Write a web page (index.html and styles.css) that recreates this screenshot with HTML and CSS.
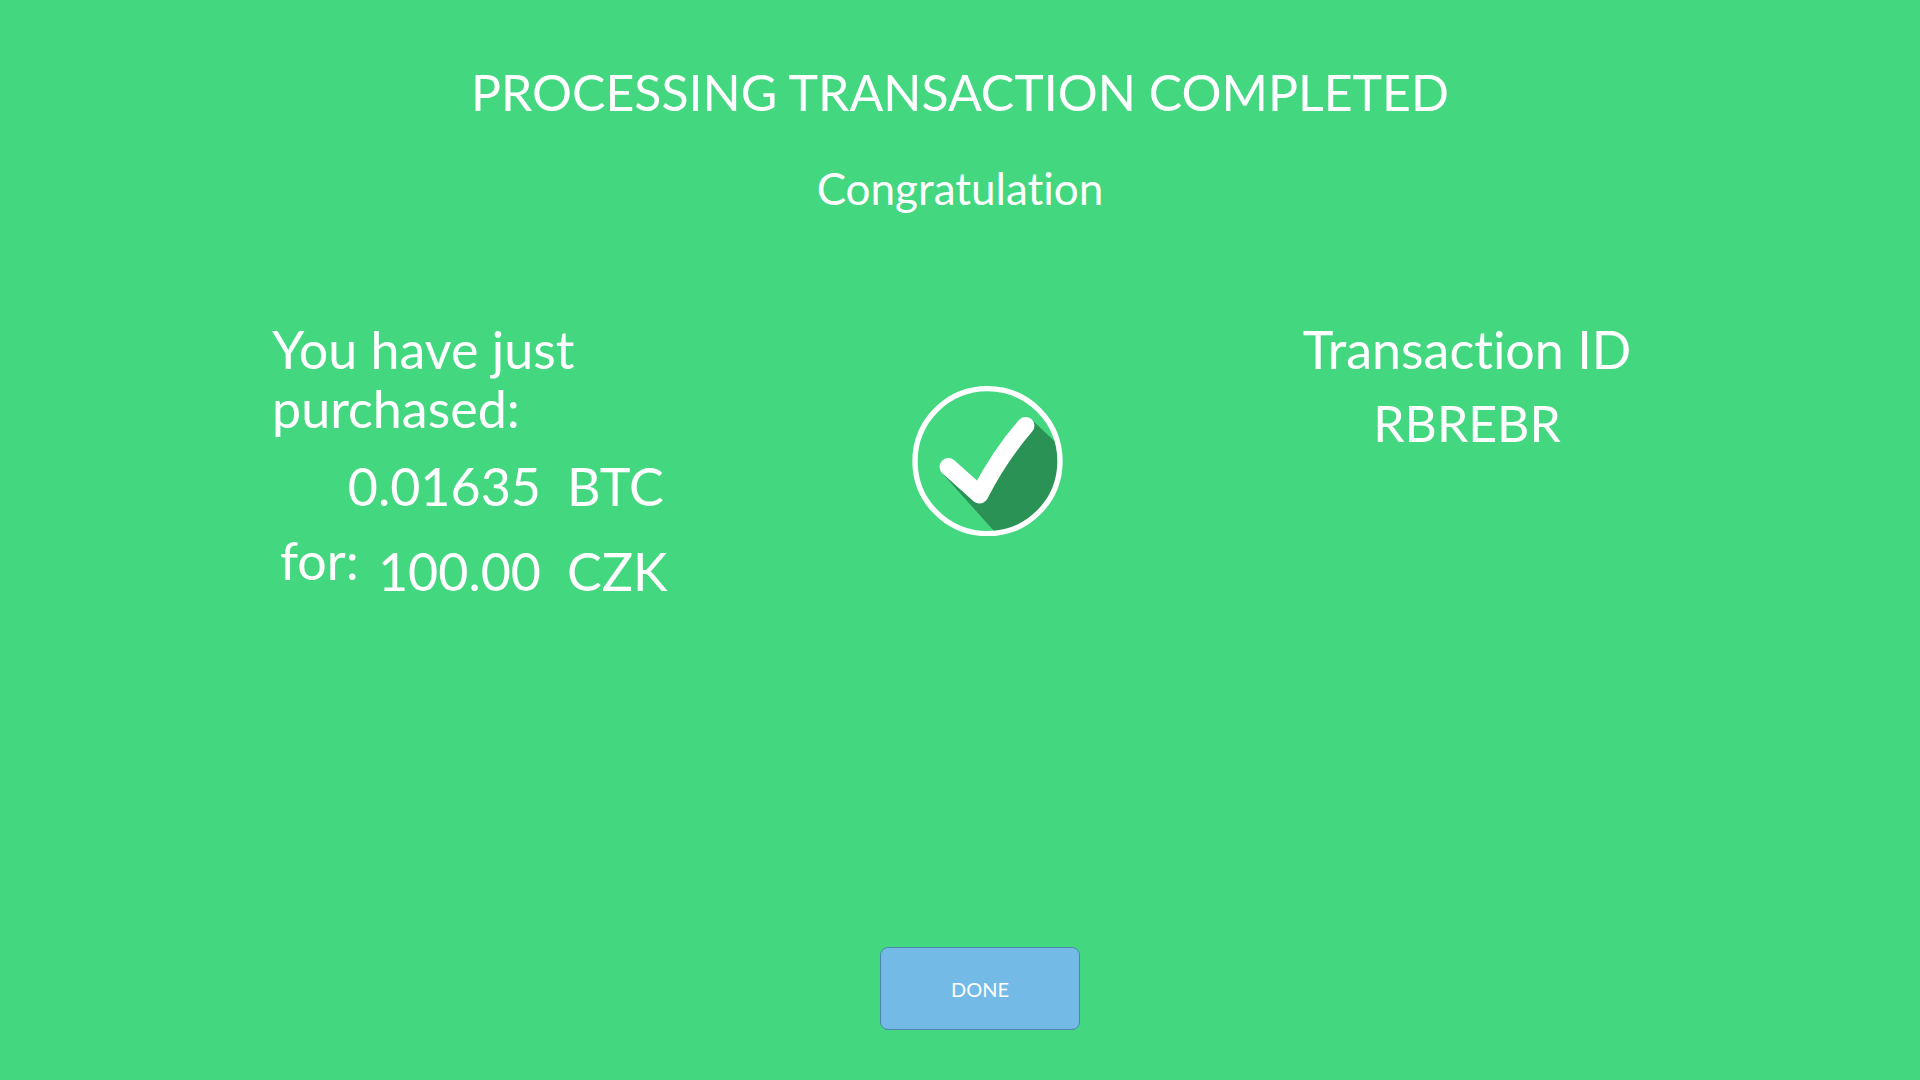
FILE: index.html
```html
<!DOCTYPE html>
<html lang="en">
<head>
    <meta charset="UTF-8">
    <meta name="viewport" content="width=device-width, initial-scale=1.0">
    <title>Processing transaction completed</title>
    <link rel="stylesheet" href="styles.css">
</head>
<body>
    <div class="page">
        <header class="header">
            <h1>PROCESSING TRANSACTION COMPLETED</h1>
            <h2>Congratulation</h2>
        </header>

        <main class="content">
            <!-- purchase summary -->
            <section class="purchase">
                <p class="purchase-title">You have just purchased:</p>
                <div class="amounts">
                    <span></span>
                    <span class="value">0.01635</span>
                    <span>BTC</span>
                    <span class="label">for:</span>
                    <span class="value paid">100.00</span>
                    <span class="paid">CZK</span>
                </div>
            </section>

            <!-- check mark -->
            <svg class="check" viewBox="37 33 452 450" aria-hidden="true">
                <defs>
                    <clipPath id="inner"><circle cx="263" cy="258" r="212"/></clipPath>
                </defs>
                <path d="M126 293L306 493H520V252L398 136L238 358Z" fill="#2a9255" clip-path="url(#inner)"/>
                <circle cx="263" cy="258" r="217" fill="none" stroke="#fff" stroke-width="16"/>
                <path d="M146 275L239 358Q300 240 377 152" fill="none" stroke="#fff" stroke-width="53" stroke-linecap="round" stroke-linejoin="round"/>
            </svg>

            <!-- transaction -->
            <section class="transaction">
                <p>Transaction ID</p>
                <p class="transaction-id">RBREBR</p>
            </section>
        </main>

        <footer class="footer">
            <button type="button" class="done-btn">DONE</button>
        </footer>
    </div>
</body>
</html>
```
FILE: styles.css
```css
* {
    box-sizing: border-box;
}
body {
    margin: 0;
    background: #43d780;
    color: white;
    font-family: Lato, 'Open Sans', sans-serif;
    font-size: 52px;
    font-variant-ligatures: none;
    line-height: 59px;
}
h1, h2, p {
    margin: 0;
    font-weight: 400;
}
.page {
    display: flex;
    flex-direction: column;
    min-height: 100vh;
    padding: 63px 0 50px;
}
.header {
    text-align: center;
}
h1 {
    font-size: 50px;
}
h2 {
    margin-top: 39px;
    font-size: 44px;
    line-height: 54px;
}
.content {
    display: grid;
    grid-template-columns: 1fr 151px 1fr;
    flex: 1;
    align-items: start;
    margin-top: 105px;
    padding: 0 217px 0 272px;
}
.purchase-title {
    max-width: 400px;
}
.amounts {
    display: grid;
    grid-template-columns: 80px 189px auto;
    justify-content: start;
    gap: 15px 0;
    margin-top: 19px;
}
.amounts .label {
    padding-left: 8px;
}
.amounts .value {
    justify-self: end;
}
.amounts span:nth-child(3n) {
    padding-left: 26px;
}
.amounts .paid {
    padding-top: 11px;
}
.check {
    width: 100%;
    margin-top: 66px;
}
.transaction {
    margin-left: 168px;
    text-align: center;
}
.transaction-id {
    margin-top: 15px;
    font-size: 50px;
}
.footer {
    display: flex;
    justify-content: center;
    padding-left: 40px;
}
.done-btn {
    width: 200px;
    height: 83px;
    border: 1px solid #4b86ad;
    border-radius: 8px;
    background: #73bae6;
    color: white;
    font-family: inherit;
    font-size: 20px;
    cursor: pointer;
}
```
